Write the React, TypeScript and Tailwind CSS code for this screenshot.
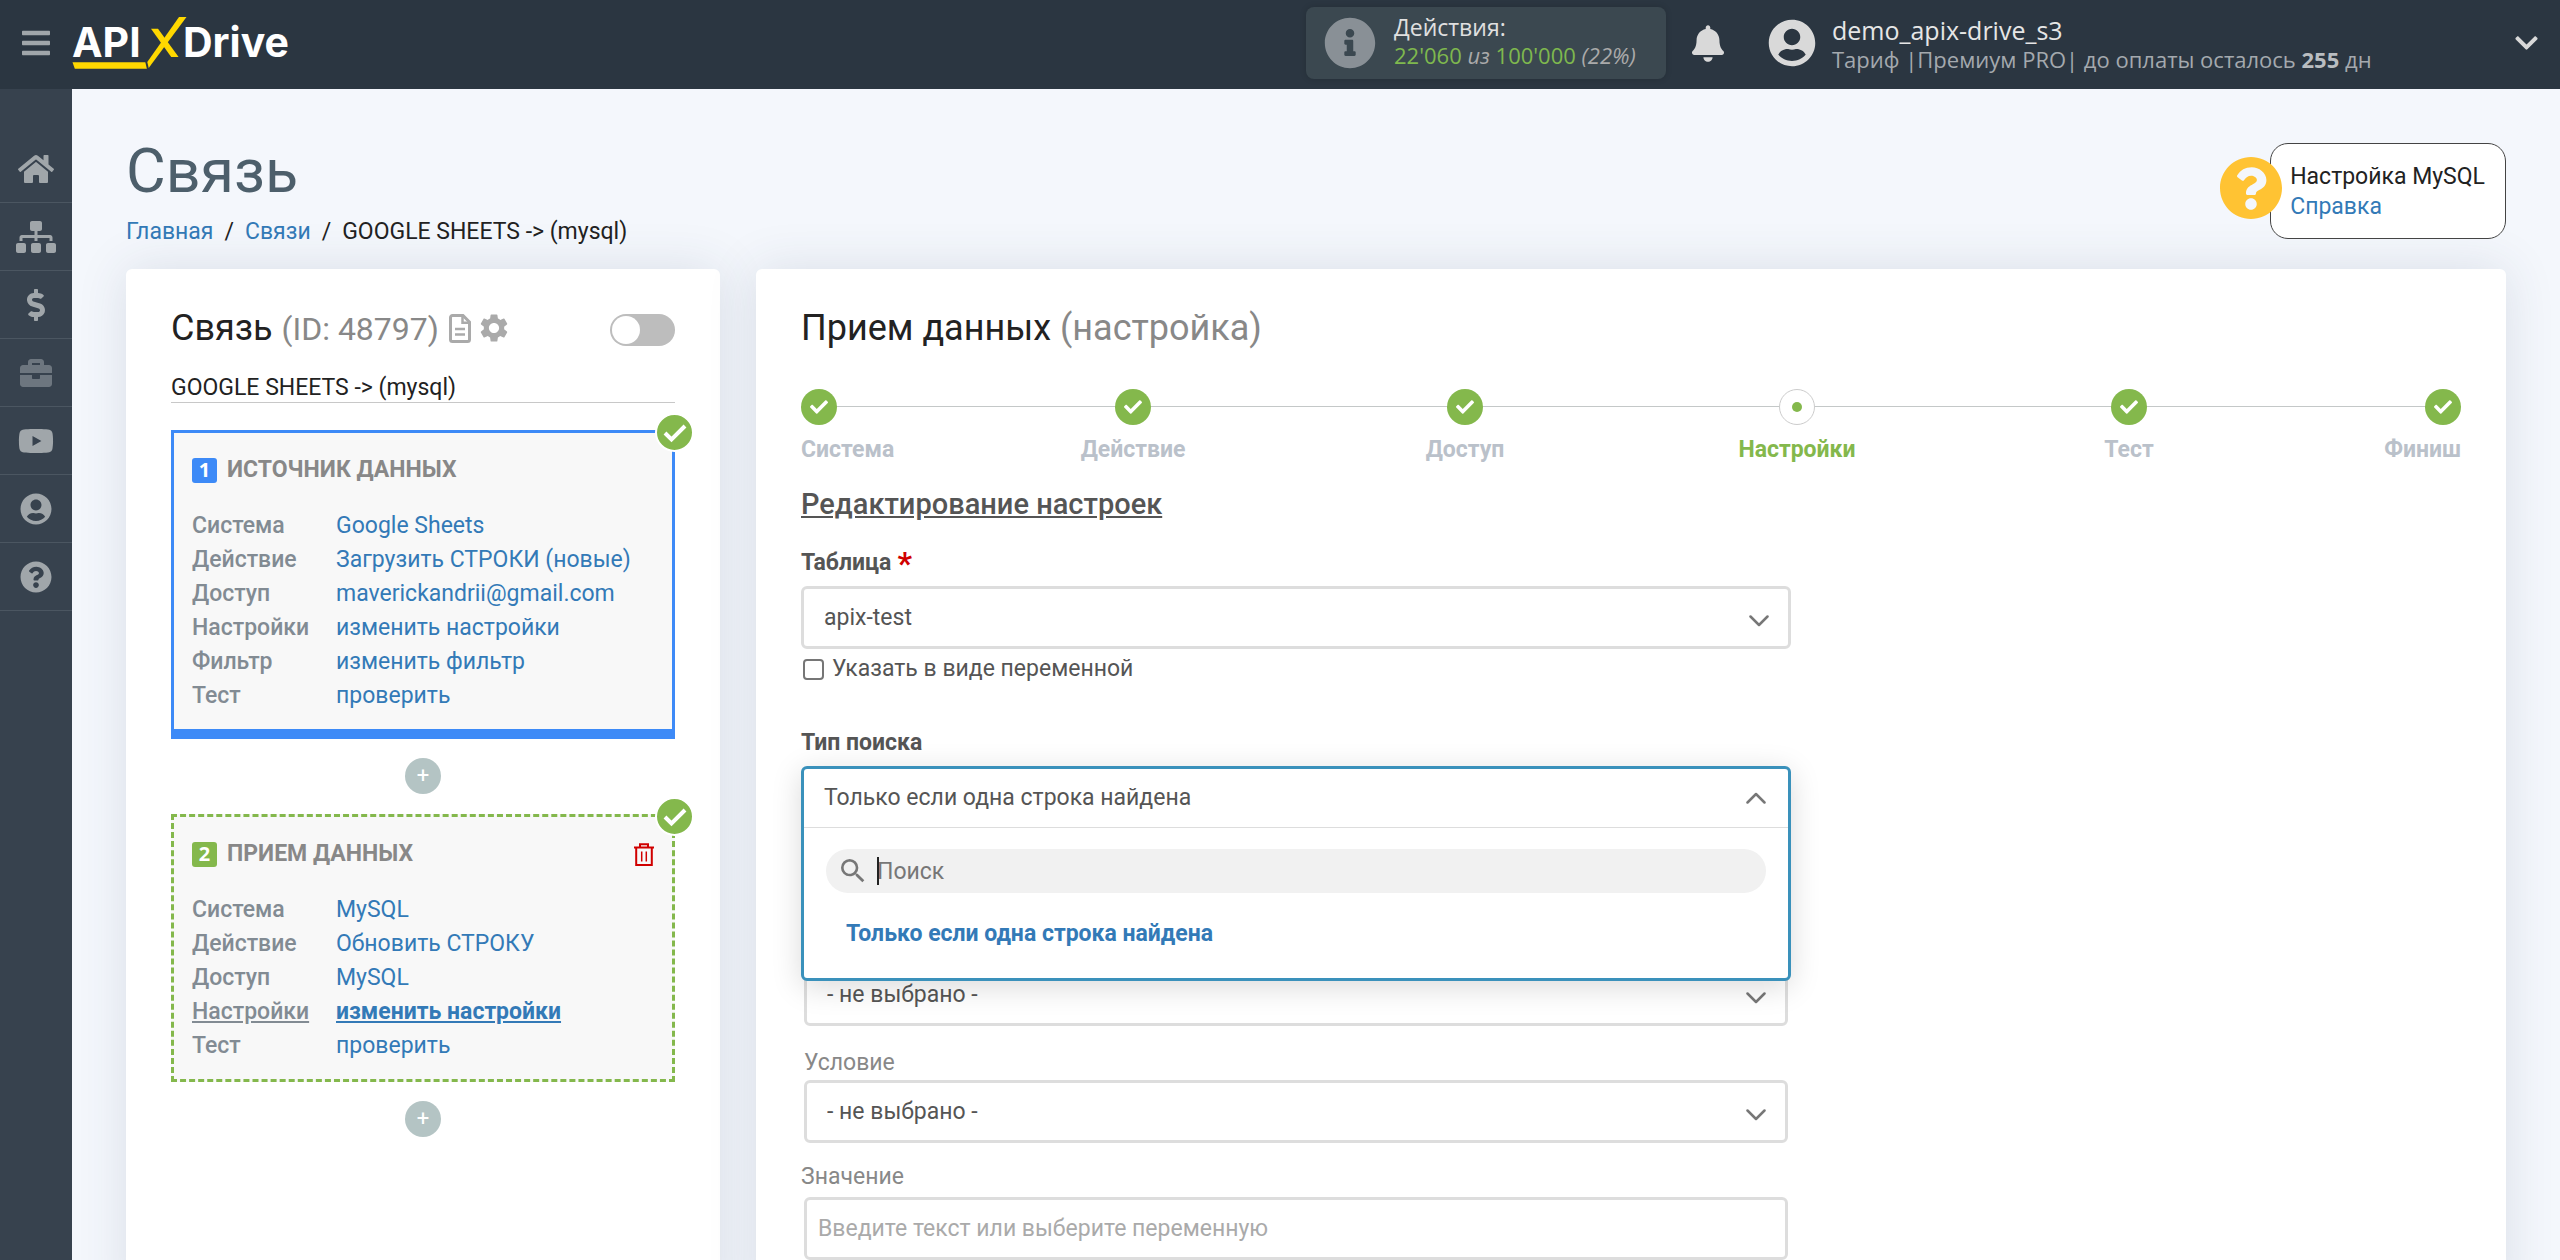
import React, { useState } from 'react';
import {
  FaBars,
  FaBell,
  FaBriefcase,
  FaCheck,
  FaChevronDown,
  FaDollarSign,
  FaHome,
  FaInfoCircle,
  FaQuestionCircle,
  FaSitemap,
  FaUserCircle,
  FaYoutube,
} from 'react-icons/fa';
import { MdSearch, MdSettings } from 'react-icons/md';

const menu = [
  { title: 'Главная', icon: FaHome },
  { title: 'Связи', icon: FaSitemap },
  { title: 'Оплата', icon: FaDollarSign },
  { title: 'Проекты', icon: FaBriefcase, muted: true },
  { title: 'Видео', icon: FaYoutube },
  { title: 'Профиль', icon: FaUserCircle },
  { title: 'Помощь', icon: FaQuestionCircle },
];

const sourceRows = [
  { label: 'Система', value: 'Google Sheets' },
  { label: 'Действие', value: 'Загрузить СТРОКИ (новые)' },
  { label: 'Доступ', value: 'maverickandrii@gmail.com' },
  { label: 'Настройки', value: 'изменить настройки' },
  { label: 'Фильтр', value: 'изменить фильтр' },
  { label: 'Тест', value: 'проверить' },
];

const targetRows = [
  { label: 'Система', value: 'MySQL' },
  { label: 'Действие', value: 'Обновить СТРОКУ' },
  { label: 'Доступ', value: 'MySQL' },
  { label: 'Настройки', value: 'изменить настройки', active: true },
  { label: 'Тест', value: 'проверить' },
];

const steps = ['Система', 'Действие', 'Доступ', 'Настройки', 'Тест', 'Финиш'];
const currentStep = 3;

const Logo: React.FC = () => (
  <svg viewBox="72 14 222 56" className="w-[222px] h-14" role="img" aria-label="APIXDrive">
    <g fill="#fff" fontFamily="Inter, sans-serif" fontWeight="700" fontSize="41">
      <text x="72" y="56">API</text>
      <text x="183" y="56">Drive</text>
    </g>
    <g fill="#ffd800">
      <path d="M72.5 61.3h72.8l1.6 6.4H74.8z" />
      <path d="M179 16h7.5l-37.8 51-1.4-6z" />
      <path d="M151 27.7h7l20.6 28.2h-7.4z" />
    </g>
  </svg>
);

const Header: React.FC = () => (
  <header className="flex h-[89px] shrink-0 items-center bg-[#2b3641] px-[22px] pb-[3px] font-['Open_Sans',sans-serif]">
    <button type="button" aria-label="Меню" className="text-[#a0a6aa]">
      <FaBars className="h-8 w-7" />
    </button>
    <a href="#" className="ml-[22px]">
      <Logo />
    </a>

    <div className="ml-auto flex h-[72px] w-[360px] items-center gap-[18px] rounded-lg bg-[#3b4850] pl-[18px] shadow-[0_0_6px_rgba(0,0,0,0.15)]">
      <FaInfoCircle className="size-[52px] shrink-0 text-[#899096]" />
      <div className="whitespace-nowrap pb-1 leading-7">
        <div className="text-[23px] text-[#e0e0e0]">Действия:</div>
        <div className="text-[22px] text-[#aaaaaa]">
          <span className="text-[#7fb84e]">22'060</span> <i>из</i>{' '}
          <span className="text-[#7fb84e]">100'000</span> <i>(22%)</i>
        </div>
      </div>
    </div>

    <button type="button" aria-label="Уведомления" className="ml-[26px] text-[#d9d9d9]">
      <FaBell className="h-[37px] w-8" />
    </button>

    <button
      type="button"
      className="ml-11 flex w-[770px] items-center whitespace-nowrap text-left text-[#d9d9d9]"
    >
      <FaUserCircle className="mr-4 size-12" />
      <span className="pt-1 leading-[29px]">
        <span className="block text-[25px] text-[#e6e6e6]">demo_apix-drive_s3</span>
        <span className="block text-[22px] text-[#a4a9ae]">
          Тариф |Премиум PRO| до оплаты осталось <b className="text-[#b9bdc0]">255</b> дн
        </span>
      </span>
      <FaChevronDown className="ml-auto h-[26px] w-[23px]" />
    </button>
  </header>
);

const Sidebar: React.FC = () => (
  <nav className="w-[72px] shrink-0 bg-[#37424e] pt-[46px]">
    {menu.map(({ title, icon: Icon, muted }) => (
      <a
        key={title}
        href="#"
        aria-label={title}
        className={`flex h-[68px] items-center justify-center border-b border-[#4b5661] ${
          muted ? 'text-[#6d767f]' : 'text-[#a0a6aa]'
        }`}
      >
        <Icon className="h-8 w-10" />
      </a>
    ))}
  </nav>
);

const StepBadge: React.FC = () => (
  <span className="absolute -right-[22px] -top-5 flex size-[39px] items-center justify-center rounded-full border-2 border-white bg-[#84b84c] text-white">
    <svg viewBox="0 0 24 24" className="size-6" fill="none" stroke="currentColor" strokeWidth="4">
      <path d="M2 12l6.5 6.5L22 5" />
    </svg>
  </span>
);

interface Row {
  label: string;
  value: string;
  active?: boolean;
}

const Rows: React.FC<{ rows: Row[] }> = ({ rows }) => (
  <dl className="mt-[22px] grid grid-cols-[144px_1fr] text-[23px] leading-[34px]">
    {rows.map((row) => (
      <React.Fragment key={row.label}>
        <dt className={`font-medium text-[#828b93] ${row.active ? 'underline' : ''}`}>{row.label}</dt>
        <dd className="whitespace-nowrap text-[#337ab7]">
          <a href="#" className={row.active ? 'font-bold underline' : ''}>
            {row.value}
          </a>
        </dd>
      </React.Fragment>
    ))}
  </dl>
);

const AddButton: React.FC = () => (
  <button
    type="button"
    aria-label="Добавить"
    className="mx-auto mt-[19px] flex size-9 items-center justify-center rounded-full bg-[#b4c4c4] text-[22px] leading-9 text-white"
  >
    +
  </button>
);

const ConnectionCard: React.FC = () => {
  const [enabled, setEnabled] = useState(false);
  const [name, setName] = useState('GOOGLE SHEETS -> (mysql)');

  return (
    <section className="w-[594px] shrink-0 rounded-md bg-white px-[45px] pb-12 pt-[35px] shadow-[0_0_50px_rgba(50,60,90,0.13)]">
      <div className="flex h-12 items-center">
        <h2 className="text-4xl leading-[48px]">
          Связь <span className="text-[32px] text-[#888888]">(ID: 48797)</span>
        </h2>
        <button type="button" aria-label="Журнал" className="ml-2.5 text-[#aaaaaa]">
          <svg viewBox="0 0 22 29" className="h-[29px] w-[22px]" fill="none" stroke="currentColor" strokeWidth="3">
            <path d="M3.5 1.5H14L20.5 8v17.5a2 2 0 0 1-2 2h-15a2 2 0 0 1-2-2v-22a2 2 0 0 1 2-2z" />
            <path d="M13.5 2v6.8H20M6 15h10M6 20.5h10" strokeWidth="2.5" />
          </svg>
        </button>
        <button type="button" aria-label="Настройки связи" className="ml-1.5 text-[#aaaaaa]">
          <MdSettings className="size-[34px]" />
        </button>
        <input
          type="checkbox"
          role="switch"
          aria-label="Включить связь"
          checked={enabled}
          onChange={(e) => setEnabled(e.target.checked)}
          className="ml-auto mt-1 h-8 w-[65px] appearance-none rounded-full bg-[#bdbdbd] p-0.5 before:block before:size-7 before:rounded-full before:bg-white checked:bg-[#84b84c] checked:before:translate-x-[33px]"
        />
      </div>

      <input
        aria-label="Название связи"
        value={name}
        onChange={(e) => setName(e.target.value)}
        className="mt-[21px] block h-[30px] w-full border-b border-[#c8c8c8] pt-0.5 text-[23px] outline-none"
      />

      <div className="relative mt-[27px] border-[3px] border-b-[10px] border-[#3d8af7] bg-[#f8f8f8] px-[18px] pb-4 pt-5">
        <StepBadge />
        <h3 className="flex items-center gap-2.5 text-[23px] font-bold leading-[34px] text-[#888888]">
          <span className="flex size-[25px] items-center justify-center rounded-[3px] bg-[#3d8af7] text-xl text-white font-['Open_Sans',sans-serif]">
            1
          </span>
          ИСТОЧНИК ДАННЫХ
        </h3>
        <Rows rows={sourceRows} />
      </div>
      <AddButton />

      <div className="relative mt-5 border-[3px] border-dashed border-[#84b84c] bg-[#f8f8f8] px-[18px] pb-4 pt-5">
        <StepBadge />
        <div className="flex items-center justify-between">
          <h3 className="flex items-center gap-2.5 text-[23px] font-bold leading-[34px] text-[#888888]">
            <span className="flex size-[25px] items-center justify-center rounded-[3px] bg-[#84b84c] text-xl text-white font-['Open_Sans',sans-serif]">
              2
            </span>
            ПРИЕМ ДАННЫХ
          </h3>
          <button type="button" aria-label="Удалить" className="text-[#d00000]">
            <svg viewBox="0 0 20 23" className="h-[23px] w-5" fill="none" stroke="currentColor" strokeWidth="2">
              <path d="M0 4.5h20M2.2 4.5V22h15.6V4.5M6 4.5V1.2h8v3.3" />
              <path d="M7.7 8.5v10M12.3 8.5v10" strokeWidth="1.5" />
            </svg>
          </button>
        </div>
        <Rows rows={targetRows} />
      </div>
      <AddButton />
    </section>
  );
};

const Stepper: React.FC = () => (
  <div className="relative mt-[37px]">
    <div className="absolute inset-x-0 top-[17px] h-px bg-[#c4c8c8]" />
    <ol className="relative flex">
      {steps.map((step, index) => {
        const first = index === 0;
        const last = index === steps.length - 1;
        const active = index === currentStep;
        return (
          <li
            key={step}
            className={`flex basis-0 flex-col gap-2 ${
              first ? 'grow items-start' : last ? 'grow items-end' : 'grow-[2] items-center'
            }`}
          >
            <span
              className={`flex size-9 items-center justify-center rounded-full ${
                active ? 'border border-[#cccccc] bg-white' : 'bg-[#84b84c] text-white'
              }`}
            >
              {active ? (
                <span className="size-2.5 rounded-full bg-[#84b84c]" />
              ) : (
                <FaCheck className="size-[18px]" />
              )}
            </span>
            <span
              className={`text-[23px] font-bold leading-[34px] ${active ? 'text-[#84b84c]' : 'text-[#bac1ca]'}`}
            >
              {step}
            </span>
          </li>
        );
      })}
    </ol>
  </div>
);

const Chevron: React.FC<{ up?: boolean }> = ({ up }) => (
  <svg
    viewBox="0 0 20 12"
    className="h-3 w-5"
    fill="none"
    stroke="#777777"
    strokeWidth="2.5"
    strokeLinecap="round"
    strokeLinejoin="round"
  >
    <path d={up ? 'M1.5 10.5L10 2l8.5 8.5' : 'M1.5 1.5L10 10l8.5-8.5'} />
  </svg>
);

interface SelectBoxProps {
  id: string;
  options: string[];
  label?: string;
}

const SelectBox: React.FC<SelectBoxProps> = ({ id, options, label }) => (
  <div className="relative">
    <select
      id={id}
      aria-label={label}
      className="block h-[63px] w-full appearance-none rounded-md border-[3px] border-[#dddddd] bg-white px-5 text-[23px] text-[#555555]"
    >
      {options.map((option) => (
        <option key={option}>{option}</option>
      ))}
    </select>
    <span className="pointer-events-none absolute right-[22px] top-[29px]">
      <Chevron />
    </span>
  </div>
);

const searchOptions = ['Только если одна строка найдена'];

const SearchType: React.FC = () => {
  const [open, setOpen] = useState(true);
  const [query, setQuery] = useState('');
  const [selected, setSelected] = useState(searchOptions[0]);

  return (
    <div className="relative h-[63px]">
      <div
        className={`absolute inset-x-0 top-0 z-10 rounded-md border-[3px] bg-white text-[23px] ${
          open ? 'border-[#3a91bb] shadow-[0_6px_30px_rgba(0,0,0,0.15)]' : 'border-[#dddddd]'
        }`}
      >
        <button
          type="button"
          aria-labelledby="search-type"
          aria-expanded={open}
          onClick={() => setOpen(!open)}
          className="flex h-[58px] w-full items-center justify-between pl-5 pr-[22px] text-[#555555]"
        >
          {selected}
          <Chevron up={open} />
        </button>
        {open && (
          <div className="border-t border-[#dddddd] px-[22px] pb-[22px] pt-[21px]">
            <div className="relative">
              <MdSearch className="absolute left-[11px] top-1.5 size-8 text-[#777777]" />
              <span className="absolute left-[51px] top-2 h-7 w-0.5 bg-[#222222]" />
              <input
                aria-label="Поиск"
                placeholder="Поиск"
                value={query}
                onChange={(e) => setQuery(e.target.value)}
                className="block h-11 w-full rounded-full bg-[#f1f1f1] pl-[51px] pr-5 caret-transparent outline-none placeholder:text-[#777777]"
              />
            </div>
            <ul className="mt-[19px]">
              {searchOptions.map((option) => (
                <li key={option}>
                  <button
                    type="button"
                    onClick={() => setSelected(option)}
                    className="block w-full px-5 text-left font-bold leading-[44px] text-[#337ab7]"
                  >
                    {option}
                  </button>
                </li>
              ))}
            </ul>
          </div>
        )}
      </div>
    </div>
  );
};

const SettingsCard: React.FC = () => (
  <section className="min-w-0 flex-1 rounded-md bg-white px-[45px] pb-12 pt-[35px] shadow-[0_0_50px_rgba(50,60,90,0.13)]">
    <h2 className="text-4xl leading-[48px]">
      Прием данных <span className="text-[#888888]">(настройка)</span>
    </h2>
    <Stepper />

    <h3 className="mt-[17px] text-[29px] font-medium leading-10 text-[#555555] underline">
      Редактирование настроек
    </h3>

    <form className="max-w-[990px] text-[23px] leading-[34px] text-[#555555]">
      <label htmlFor="table" className="mt-[22px] flex gap-1.5 font-bold">
        Таблица <span className="text-[32px] text-[#d00000]">*</span>
      </label>
      <div className="mt-1.5">
        <SelectBox id="table" options={['apix-test']} />
      </div>
      <label className="mt-[3px] flex items-center gap-2">
        <input
          type="checkbox"
          className="ml-0.5 size-[21px] appearance-none rounded border-2 border-[#767676] bg-white checked:bg-[#337ab7]"
        />
        Указать в виде переменной
      </label>

      <div id="search-type" className="mt-10 font-bold">
        Тип поиска
      </div>
      <div className="mt-1.5">
        <SearchType />
      </div>

      <div className="mt-[134px] px-[3px]">
        <SelectBox id="column" label="Поле" options={['- не выбрано -']} />
        <label htmlFor="condition" className="mt-5 block text-[#888888]">
          Условие
        </label>
        <SelectBox id="condition" options={['- не выбрано -']} />
      </div>

      <label htmlFor="value" className="mt-[17px] block text-[#888888]">
        Значение
      </label>
      <div className="mt-[3px] px-[3px]">
        <input
          id="value"
          placeholder="Введите текст или выберите переменную"
          className="block h-[63px] w-full rounded-md border-[3px] border-[#dddddd] bg-white px-[11px] placeholder:text-[#aaaaaa]"
        />
      </div>
    </form>
  </section>
);

const App: React.FC = () => {
  return (
    <div className="flex h-screen flex-col overflow-hidden bg-[#f4f7fc] text-[#222222] font-['Roboto',sans-serif]">
      <Header />
      <div className="flex min-h-0 flex-1">
        <Sidebar />
        <main className="min-w-0 flex-1 overflow-y-auto px-[54px] pt-[50px] [scrollbar-width:none]">
          <div className="flex items-start justify-between">
            <div>
              <h1 className="text-[61px] leading-[64px] text-[#4d5f6b]">Связь</h1>
              <nav className="mt-3 flex gap-[11px] text-[23px] leading-[34px]">
                <a href="#" className="text-[#337ab7]">Главная</a>
                <span>/</span>
                <a href="#" className="text-[#337ab7]">Связи</a>
                <span>/</span>
                <span>GOOGLE SHEETS -&gt; (mysql)</span>
              </nav>
            </div>

            <aside className="relative mt-1 rounded-[18px] border border-[#444444] bg-white pb-4 pl-[19px] pr-5 pt-[18px] text-[23px] leading-[30px]">
              <FaQuestionCircle className="absolute -left-[52px] top-3 size-16 text-[#ffc333]" />
              <div>Настройка MySQL</div>
              <a href="#" className="text-[#337ab7]">Справка</a>
            </aside>
          </div>

          <div className="mt-5 flex gap-9">
            <ConnectionCard />
            <SettingsCard />
          </div>
        </main>
      </div>
    </div>
  );
};

export default App;
